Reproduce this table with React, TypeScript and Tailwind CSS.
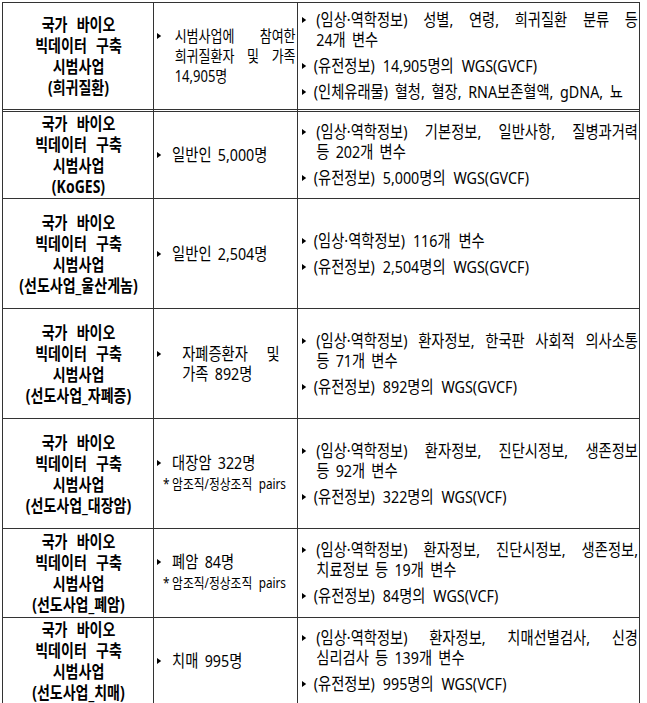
import React from "react";

type Row = {
  h: string;
  title: string;
  mid: { lines: string[]; bw: string; ww: string; fs: string; note?: boolean; justify: number };
  items: string[][];
};

const rows: Row[] = [
  {
    h: "h-[109px] border-b-[3px] border-double",
    title: "(희귀질환)",
    mid: { lines: ["시범사업에 참여한", "희귀질환자 및 가족", "14,905명"], bw: "w-[21px]", ww: "w-[165px]", fs: "text-[15.5px]", justify: 2 },
    items: [
      ["(임상·역학정보) 성별, 연령, 희귀질환 분류 등", "24개 변수"],
      ["(유전정보) 14,905명의 WGS(GVCF)"],
      ["(인체유래물) 혈청, 혈장, RNA보존혈액, gDNA, 뇨"],
    ],
  },
  {
    h: "h-[87px] border-b",
    title: "(KoGES)",
    mid: { lines: ["일반인 5,000명"], bw: "w-[18px]", ww: "w-[165px]", fs: "text-[17px]", justify: 0 },
    items: [
      ["(임상·역학정보) 기본정보, 일반사항, 질병과거력", "등 202개 변수"],
      ["(유전정보) 5,000명의 WGS(GVCF)"],
    ],
  },
  {
    h: "h-[110px] border-b",
    title: "(선도사업_울산게놈)",
    mid: { lines: ["일반인 2,504명"], bw: "w-[18px]", ww: "w-[165px]", fs: "text-[17px]", justify: 0 },
    items: [["(임상·역학정보) 116개 변수"], ["(유전정보) 2,504명의 WGS(GVCF)"]],
  },
  {
    h: "h-[110px] border-b",
    title: "(선도사업_자폐증)",
    mid: { lines: ["자폐증환자 및", "가족 892명"], bw: "w-[30px]", ww: "w-[146px]", fs: "text-[17px]", justify: 1 },
    items: [
      ["(임상·역학정보) 환자정보, 한국판 사회적 의사소통", "등 71개 변수"],
      ["(유전정보) 892명의 WGS(GVCF)"],
    ],
  },
  {
    h: "h-[110px] border-b",
    title: "(선도사업_대장암)",
    mid: { lines: ["대장암 322명"], bw: "w-[18px]", ww: "w-[165px]", fs: "text-[17px]", note: true, justify: 0 },
    items: [
      ["(임상·역학정보) 환자정보, 진단시정보, 생존정보", "등 92개 변수"],
      ["(유전정보) 322명의 WGS(VCF)"],
    ],
  },
  {
    h: "h-[89px] border-b",
    title: "(선도사업_폐암)",
    mid: { lines: ["폐암 84명"], bw: "w-[18px]", ww: "w-[165px]", fs: "text-[17px]", note: true, justify: 0 },
    items: [
      ["(임상·역학정보) 환자정보, 진단시정보, 생존정보,", "치료정보 등 19개 변수"],
      ["(유전정보) 84명의 WGS(VCF)"],
    ],
  },
  {
    h: "h-[86px] border-b",
    title: "(선도사업_치매)",
    mid: { lines: ["치매 995명"], bw: "w-[18px]", ww: "w-[165px]", fs: "text-[17px]", justify: 0 },
    items: [
      ["(임상·역학정보) 환자정보, 치매선별검사, 신경", "심리검사 등 139개 변수"],
      ["(유전정보) 995명의 WGS(VCF)"],
    ],
  },
];

function Tri() {
  return <span className="h-0 w-0 border-y-[3px] border-l-[5px] border-y-transparent border-l-black" />;
}

function Item({ lines }: { lines: string[] }) {
  const multi = lines.length > 1;
  const singleWs = lines[0].includes("인체유래물") ? "[word-spacing:3.5px]" : "[word-spacing:5px]";
  return (
    <div className="flex">
      <span className="flex h-[20px] w-[14px] shrink-0 items-center">
        <Tri />
      </span>
      <div className={multi ? "min-w-0 flex-1 pl-[3px]" : "min-w-0 flex-1"}>
        {lines.map((l, i) => (
          <div
            key={i}
            className={
              i < lines.length - 1
                ? "text-justify [text-align-last:justify]"
                : multi
                ? "whitespace-nowrap [word-spacing:3px]"
                : `whitespace-nowrap ${singleWs}`
            }
          >
            {l}
          </div>
        ))}
      </div>
    </div>
  );
}

export default function App() {
  return (
    <div className="h-[703px] overflow-hidden bg-white font-['Noto_Sans','Noto_Sans_CJK_KR',sans-serif] text-black">
      <div className="ml-[2px] mt-[2px] grid w-[638px] grid-cols-[151px_144px_342px] border-l border-t border-[#333]">
        {rows.map((r, ri) => (
          <React.Fragment key={ri}>
            <div className={`${r.h} flex flex-col items-center justify-center overflow-hidden border-r border-[#333]`}>
              <div className="w-[187px] shrink-0 scale-x-[0.8] text-center text-[17.5px] font-bold leading-[21px] [word-spacing:7px]">
                <div>국가 바이오</div>
                <div>빅데이터 구축</div>
                <div>시범사업</div>
                <div className="[word-spacing:0px]">{r.title}</div>
              </div>
            </div>
            <div className={`${r.h} flex flex-col justify-center overflow-hidden border-r border-[#333] pl-[3px]`}>
              <div className={`${r.mid.ww} origin-left scale-x-[0.84] ${r.mid.fs} leading-[20px]`}>
                <div className="flex">
                  <span className={`flex h-[20px] ${r.mid.bw} shrink-0 items-center`}>
                    <Tri />
                  </span>
                  <div className="min-w-0 flex-1">
                    {r.mid.lines.map((l, i) => (
                      <div
                        key={i}
                        className={
                          i < r.mid.justify
                            ? "text-justify [text-align-last:justify]"
                            : "whitespace-nowrap [word-spacing:3px]"
                        }
                      >
                        {l}
                      </div>
                    ))}
                  </div>
                </div>
                {r.mid.note && (
                  <div className="whitespace-nowrap pl-[7px] text-[14px] leading-[22px] [word-spacing:4px]">
                    <span className="inline-block w-[11px]">*</span>암조직/정상조직 pairs
                  </div>
                )}
              </div>
            </div>
            <div className={`${r.h} flex flex-col justify-center overflow-hidden border-r border-[#333] pl-[4px]`}>
              <div className="flex w-[400px] origin-left scale-x-[0.84] flex-col gap-[6px] text-[17px] leading-[20px]">
                {r.items.map((it, ii) => (
                  <Item key={ii} lines={it} />
                ))}
              </div>
            </div>
          </React.Fragment>
        ))}
      </div>
    </div>
  );
}
